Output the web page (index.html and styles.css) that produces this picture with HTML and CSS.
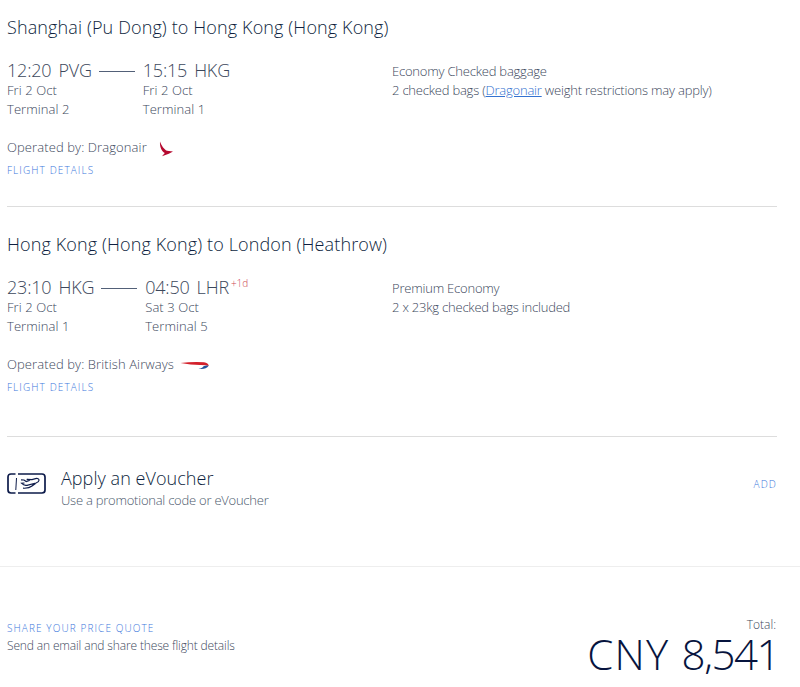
FILE: index.html
```html
<!DOCTYPE html>
<html lang="en">
<head>
<meta charset="utf-8">
<title>Flight summary</title>
<link rel="stylesheet" href="styles.css">
</head>
<body>
<main class="summary">
  <section class="segment segment-first">
    <h2 class="title title-first">Shanghai (Pu Dong) to Hong Kong (Hong Kong)</h2>
    <div class="row">
      <div class="route">
        <div class="stop"><div class="time"><span>12:20</span><span>PVG</span></div><div class="sub">Fri 2 Oct</div><div class="sub">Terminal 2</div></div>
        <div class="dash"></div>
        <div class="stop"><div class="time"><span>15:15</span><span>HKG</span></div><div class="sub">Fri 2 Oct</div><div class="sub">Terminal 1</div></div>
      </div>
      <div class="baggage">
        <div class="bag-title">Economy Checked baggage</div>
        <div class="bag-text">2 checked bags (<a href="#">Dragonair</a> weight restrictions may apply)</div>
      </div>
    </div>
    <div class="operator operator-ka"><span class="op-text">Operated by: Dragonair</span>
      <svg class="wing" width="15" height="16" viewBox="0 0 15 16"><path d="M1 .5C2.400 4.500 5 8.500 8 9.800L14 10.500 9.800 12.800 3 15.200 5.800 12C2.500 10 .6 6 1 .5Z" fill="#b5092f"/></svg>
    </div>
    <a class="action details" href="#">FLIGHT DETAILS</a>
  </section>
  <section class="segment segment-second">
    <h2 class="title title-second">Hong Kong (Hong Kong) to London (Heathrow)</h2>
    <div class="row">
      <div class="route">
        <div class="stop"><div class="time"><span>23:10</span><span>HKG</span></div><div class="sub">Fri 2 Oct</div><div class="sub">Terminal 1</div></div>
        <div class="dash"></div>
        <div class="stop"><div class="time"><span>04:50</span><span>LHR</span><span class="plus">+1d</span></div><div class="sub">Sat 3 Oct</div><div class="sub">Terminal 5</div></div>
      </div>
      <div class="baggage">
        <div class="bag-title">Premium Economy</div>
        <div class="bag-incl">2 x 23kg checked bags included</div>
      </div>
    </div>
    <div class="operator operator-ba"><span class="op-text">Operated by: British Airways</span>
      <svg class="ribbon" width="30" height="10" viewBox="0 0 30 10"><path d="M.5 2Q12 .5 24 1.200Q28.400 1.700 28.700 5Q26 3.900 20 4Q11 3.900 .5 2Z" fill="#d3202b"/><path d="M28.700 4.800Q25.500 9 18.500 7.800Q23 7 23.500 5.200Q26 4.200 28.700 4.800Z" fill="#24529b"/></svg>
    </div>
    <a class="action details" href="#">FLIGHT DETAILS</a>
  </section>
  <section class="voucher">
    <svg class="ticket" width="40" height="22" viewBox="0 0 40 22" fill="none" stroke="#0d1b4a" stroke-width="1.700"><path d="M8.500 1H4Q1 1 1 4V17Q1 20 4 20H8.500M11 1H35Q38 1 38 4V17Q38 20 35 20H11"/><path d="M9.500 5L8.800 17" stroke-width="1"/><path d="M14 6.800L17 7 19.200 8.600 22 7.600 19.800 6.300 25 6.600 28.500 5.600Q32 5 32 7.200Q32 8.800 29 10L20 12.300Q17 13 14.500 10.200L17.500 10M16 15.200Q22 15.600 25 13L28.500 10.500" stroke-width="1.200"/></svg>
    <div class="voucher-copy">
      <h3 class="voucher-title">Apply an eVoucher</h3>
      <div class="voucher-text">Use a promotional code or eVoucher</div>
    </div>
    <a class="action add" href="#">ADD</a>
  </section>
</main>
<footer class="footer">
  <div class="share">
    <a class="action share-link" href="#">SHARE YOUR PRICE QUOTE</a>
    <div class="share-text">Send an email and share these flight details</div>
  </div>
  <div class="total"><div class="total-label">Total:</div><div class="price"><span class="currency">CNY </span><span class="amount">8,541</span></div></div>
</footer>
</body>
</html>
```
FILE: styles.css
```css
* { box-sizing: border-box; }
body { margin: 0; background: #fff; color: #3c485c; font: 300 13px/19px "Open Sans", sans-serif; overflow: hidden; }
h2, h3 { margin: 0; font-weight: 300; color: #0e1f40; white-space: nowrap; }
.summary { padding: 0 23px 0 7px; }
.segment { border-bottom: 1px solid #ddd; }
.segment-first { padding-top: 15px; height: 207px; }
.segment-second { padding-top: 25px; height: 230px; }
.title { font-size: 18px; line-height: 25px; margin-bottom: 19px; width: max-content; letter-spacing: 0.12px; }
.row { display: grid; grid-template-columns: 385px 1fr; }
.route { display: flex; }
.time { display: flex; gap: 7px; font-size: 18px; line-height: 22px; letter-spacing: -0.2px; }
.sub { letter-spacing: 0.08px; width: max-content; }
.dash { width: 36px; height: 1px; margin: 12px 8px 0 7px; background: #526078; }
.plus { font-size: 10px; line-height: 14px; color: #cc4850; margin-left: -5px; letter-spacing: 0; }
.baggage { padding-top: 3px; white-space: nowrap; letter-spacing: -0.21px; }
.baggage a { color: #3472d0; }
.operator { display: flex; margin-top: 19px; height: 19px; letter-spacing: 0.1px; }
.operator svg { flex: none; }
.wing { margin: 3px 0 0 12px; }
.ribbon { margin: 6px 0 0 6px; }
.action { color: #3d78dc; font-size: 10px; line-height: 14px; letter-spacing: 1.1px; text-decoration: none; }
.details { display: block; margin-top: 6px; width: max-content; }
.voucher { display: flex; height: 129px; padding-top: 29px; }
.ticket { margin-top: 7px; }
.voucher-copy { margin-left: 14px; }
.voucher-title { font-size: 18px; line-height: 25px; width: max-content; letter-spacing: 0.05px; }
.voucher-text { color: #4b596c; width: max-content; letter-spacing: -0.24px; }
.add { margin: 11px 0 0 auto; }
.footer { display: flex; justify-content: space-between; border-top: 1px solid #eee; padding: 49px 24px 0 7px; }
.share { padding-top: 5px; }
.share-link { display: block; width: max-content; }
.share-text { font-size: 12px; width: max-content; margin-top: 1px; letter-spacing: -0.14px; }
.total { display: flex; flex-direction: column; align-items: flex-end; white-space: nowrap; }
.total-label { font-size: 12px; line-height: 18px; }
.price { display: flex; color: #07143e; font-size: 42px; line-height: 40px; margin-right: -3px; white-space: pre; }
.currency { letter-spacing: 1.2px; }
.amount { letter-spacing: -1.5px; }
```
